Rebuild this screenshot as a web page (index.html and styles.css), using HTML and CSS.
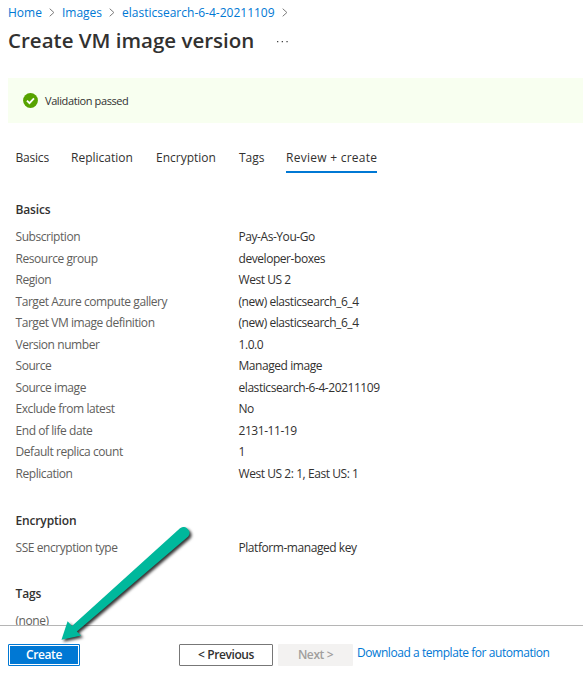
FILE: index.html
```html
<!DOCTYPE html>
<html lang="en">
<head>
<meta charset="utf-8">
<title>Create VM image version</title>
<link rel="stylesheet" href="styles.css">
</head>
<body>
<div class="page">
  <nav class="breadcrumb">
    <a class="home">Home</a><svg class="chev" viewBox="0 0 6 9"><path d="M.7.7l4.2 3.8L.7 8.3"/></svg>
    <a class="images">Images</a><svg class="chev" viewBox="0 0 6 9"><path d="M.7.7l4.2 3.8L.7 8.3"/></svg>
    <a class="item">elasticsearch-6-4-20211109</a><svg class="chev" viewBox="0 0 6 9"><path d="M.7.7l4.2 3.8L.7 8.3"/></svg>
  </nav>
  <header class="title"><h1>Create VM image version</h1><svg class="more" viewBox="0 0 11 2"><path d="M0 0h1.3v1.3H0zM4.7 0H6v1.3H4.7zM9.4 0h1.3v1.3H9.4z"/></svg></header>
  <div class="banner">
    <svg class="check" viewBox="0 0 16 16"><circle cx="8" cy="8" r="7.9"/><path d="M4.2 8.2l2.7 2.6 4.8-5"/></svg>
    <span>Validation passed</span>
  </div>
  <div class="tabs">
    <span class="tab t1">Basics</span><span class="tab t2">Replication</span><span class="tab t3">Encryption</span><span class="tab t4">Tags</span><span class="tab active">Review + create</span>
  </div>
  <main class="content">
    <h2>Basics</h2>
    <dl>
      <dt>Subscription</dt><dd>Pay-As-You-Go</dd>
      <dt>Resource group</dt><dd>developer-boxes</dd>
      <dt>Region</dt><dd>West US 2</dd>
      <dt>Target Azure compute gallery</dt><dd>(new) elasticsearch_6_4</dd>
      <dt>Target VM image definition</dt><dd>(new) elasticsearch_6_4</dd>
      <dt>Version number</dt><dd>1.0.0</dd>
      <dt>Source</dt><dd>Managed image</dd>
      <dt>Source image</dt><dd>elasticsearch-6-4-20211109</dd>
      <dt>Exclude from latest</dt><dd>No</dd>
      <dt>End of life date</dt><dd>2131-11-19</dd>
      <dt>Default replica count</dt><dd>1</dd>
      <dt>Replication</dt><dd>West US 2: 1, East US: 1</dd>
    </dl>
    <h2 class="enc">Encryption</h2>
    <dl><dt>SSE encryption type</dt><dd>Platform-managed key</dd></dl>
    <h2 class="tags">Tags</h2>
    <dl><dt>(none)</dt><dd></dd></dl>
  </main>
  <footer class="footer">
    <button class="btn primary">Create</button>
    <button class="btn prev">&lt; Previous</button>
    <button class="btn next" disabled>Next &gt;</button>
    <a class="download">Download a template for automation</a>
  </footer>
  <svg class="arrow" viewBox="0 0 150 130">
    <path d="M11.5 119.7L17.6 101.3L22 106L130 8.3A5.9 5.9 0 0 1 138.2 16.6L26.8 111.5L31.2 115.6Z"/>
  </svg>
</div>
</body>
</html>
```
FILE: styles.css
```css
* { box-sizing: border-box; }
body { margin: 0; background: #fff; color: #323130; font: 12px/16px "Open Sans", "Noto Sans", sans-serif; }
.page { position: relative; width: 583px; height: 681px; overflow: hidden; display: flex; flex-direction: column; white-space: nowrap; }
h1, h2, dl, dd { margin: 0; }
.breadcrumb { display: flex; align-items: center; height: 26px; padding: 0 0 1px 8px; color: #0078d4; }
.chev { width: 6px; height: 9px; margin: 0 7px; fill: none; stroke: #7a7a7a; stroke-width: 1; }
.title { display: flex; height: 52px; padding-left: 8px; }
h1 { font-size: 20.5px; line-height: 29px; font-weight: 600; }
.more { width: 11px; height: 2px; margin: 15px 0 0 23px; fill: #444; }
.banner { display: flex; align-items: center; height: 45px; margin-left: 8px; padding-left: 15px; background: #f8fff0; font-size: 11px; letter-spacing: -.4px; }
.check { width: 15px; height: 15px; margin-right: 7px; }
.check circle { fill: #57a300; }
.check path { fill: none; stroke: #fff; stroke-width: 2; }
.tabs { display: flex; height: 50px; margin: 23px 0 0 15.5px; }
.tab { height: 27px; line-height: 23px; flex: none; }
.t1 { width: 55.5px; letter-spacing: -.2px; } .t2 { width: 85px; } .t3 { width: 83px; } .t4 { width: 47px; }
.active { border-bottom: 2px solid #0078d4; font-weight: 500; letter-spacing: .26px; }
.content { flex: 1; min-height: 0; overflow: hidden; padding: 5px 0 0 15.5px; }
h2 { font-size: 12px; line-height: 18px; font-weight: 600; margin-bottom: 7px; letter-spacing: -.15px; }
dl { display: grid; grid-template-columns: 223px 1fr; grid-auto-rows: 21.55px; line-height: 22px; letter-spacing: -.44px; }
dt { color: #605e5c; }
.enc, .tags { margin-top: 27px; }
.footer { display: flex; height: 56px; border-top: 1px solid #b5b5b5; padding: 18px 0 0 8px; }
.btn { height: 22px; padding: 0; border-radius: 1px; font: 600 12px/18px "Open Sans", sans-serif; letter-spacing: -.4px; }
.primary { width: 72px; background: #0078d4; border: 1px solid #0078d4; box-shadow: inset 0 0 0 1px #fff; color: #fff; }
.prev { width: 94px; margin-left: 99px; background: #fff; border: 1px solid #777; color: #323130; }
.next { width: 75px; margin-left: 5px; background: #f3f2f1; border: 0; color: #a19f9d; }
.download { margin-left: 4px; line-height: 18px; color: #0078d4; letter-spacing: -.44px; }
.arrow { position: absolute; left: 50px; top: 520px; width: 150px; height: 130px; fill: #00b89c; filter: drop-shadow(2px 2px 1.5px rgba(0,0,0,.8)); }
```
